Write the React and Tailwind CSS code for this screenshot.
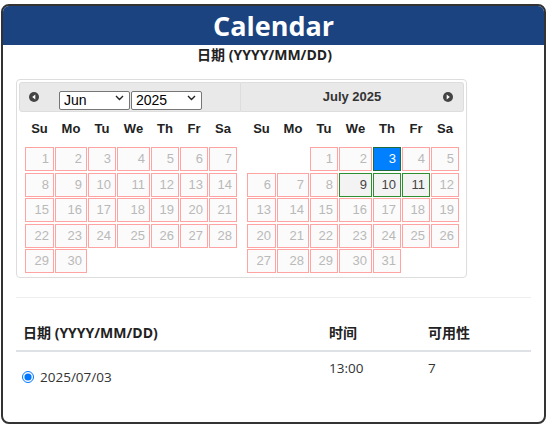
import { useState } from 'react'

const COLS = [29, 32, 28, 33, 28, 28, 28]
const DAYS = ['Su', 'Mo', 'Tu', 'We', 'Th', 'Fr', 'Sa']
const ENABLED = [9, 10, 11]

function CircleArrow({ dir }) {
  return (
    <svg width="10" height="10" viewBox="0 0 10 10" className="block">
      <circle cx="5" cy="5" r="5" fill="#444" />
      {dir === 'prev' ? (
        <polygon points="6.3,2.6 6.3,7.4 3.2,5" fill="#fff" />
      ) : (
        <polygon points="3.7,2.6 3.7,7.4 6.8,5" fill="#fff" />
      )}
    </svg>
  )
}

function FakeSelect({ value, options }) {
  return (
    <div className="relative w-[71px] h-[19px]">
      <select
        defaultValue={value}
        className="appearance-none w-full h-full border border-[#767676] rounded-[2px] bg-white pl-[4px] text-[14px] leading-[17px] text-black outline-none"
      >
        {options.map((o) => <option key={o}>{o}</option>)}
      </select>
      <svg width="9" height="6" viewBox="0 0 9 6" className="absolute right-[6px] top-[7px] pointer-events-none">
        <path d="M1 1l3.5 3.5L8 1" fill="none" stroke="#222" strokeWidth="1.4" />
      </svg>
    </div>
  )
}

function Cell({ day, selected, enabled }) {
  if (!day) return <div />
  if (selected) {
    return (
      <div className="h-[24px] border border-[#1e6b3c] bg-[#007fff] text-white text-right pr-[4px] leading-[22px]">{day}</div>
    )
  }
  if (enabled) {
    return (
      <div className="h-[24px] border border-[#2f8f2f] bg-[#f3f3f3] text-[#454545] text-right pr-[4px] leading-[22px]">{day}</div>
    )
  }
  return (
    <div className="h-[24px] border border-[#ffa3a3] bg-[#fbfbfb] text-[#b9b9b9] text-right pr-[4px] leading-[22px]">{day}</div>
  )
}

function Month({ offset, count, active }) {
  const cells = []
  for (let i = 0; i < offset; i++) cells.push(null)
  for (let d = 1; d <= count; d++) cells.push(d)
  const template = COLS.map((c) => c + 'px').join(' ')
  return (
    <div className="pl-[6px]">
      <div className="grid h-[34px] items-center gap-x-[1px]" style={{ gridTemplateColumns: template }}>
        {DAYS.map((d) => (
          <div key={d} className="text-center font-bold text-[13px] text-[#222]">{d}</div>
        ))}
      </div>
      <div className="grid mt-[1px] gap-x-[1px] gap-y-[1.5px] text-[13px]" style={{ gridTemplateColumns: template }}>
        {cells.map((d, i) => (
          <Cell key={i} day={d} selected={active && d === 3} enabled={active && ENABLED.includes(d)} />
        ))}
      </div>
    </div>
  )
}

export default function App() {
  const [picked] = useState('2025/07/03')
  return (
    <div className="w-[554px] h-[428px] bg-white pt-[4px] pl-[1px]">
      <div className="w-[545px] h-[420px] border-2 border-[#333] rounded-[8px] overflow-hidden bg-white">
        <div className="h-[39px] bg-[#1b4380] text-white text-center font-bold text-[27px] leading-[39px] font-['Open_Sans',sans-serif]">
          Calendar
        </div>
        <div className="text-center pr-[18px] font-bold text-[14px] leading-[20px] text-[#222] font-['Open_Sans','Noto_Sans_CJK_SC',sans-serif]">
          日期 (YYYY/MM/DD)
        </div>

        <div className="ml-[13px] mt-[14px] w-[451px] h-[199px] border border-[#dddddd] rounded-[4px] p-[2px] font-['Liberation_Sans',Arial,sans-serif]">
          <div className="flex">
            <div className="w-[222px]">
              <div className="h-[30px] bg-[#e9e9e9] border border-[#dddddd] rounded-l-[3px] flex items-center">
                <div className="ml-[9px]"><CircleArrow dir="prev" /></div>
                <div className="ml-[20px] flex gap-[1px]">
                  <FakeSelect value="Jun" options={['Jan', 'Feb', 'Mar', 'Apr', 'May', 'Jun', 'Jul', 'Aug', 'Sep', 'Oct', 'Nov', 'Dec']} />
                  <FakeSelect value="2025" options={['2024', '2025', '2026']} />
                </div>
              </div>
              <Month offset={0} count={30} />
            </div>
            <div className="w-[223px]">
              <div className="h-[30px] bg-[#e9e9e9] border border-l-0 border-[#dddddd] rounded-r-[3px] flex items-center relative">
                <div className="flex-1 text-center font-bold text-[13px] text-[#333]">July 2025</div>
                <div className="absolute right-[10px] top-[9px]"><CircleArrow dir="next" /></div>
              </div>
              <Month offset={2} count={31} active />
            </div>
          </div>
        </div>

        <div className="mx-[13px] mt-[19px] border-t border-[#eeeeee] font-['Open_Sans','Noto_Sans_CJK_SC',sans-serif] text-[13.5px] text-[#222]">
          <div className="mt-[17px] flex pt-[8px] pb-[7px] border-b-2 border-[#dee2e6] font-bold text-[14px] leading-[20px]">
            <div className="w-[306px] pl-[7px]">日期 (YYYY/MM/DD)</div>
            <div className="w-[99px] pl-[7px]">时间</div>
            <div className="flex-1 pl-[7px]">可用性</div>
          </div>
          <div className="flex leading-[20px] text-[#333]">
            <label className="w-[306px] pl-[6px] pt-[15px] flex items-center gap-[6px]">
              <input type="radio" name="slot" defaultChecked className="w-[12px] h-[12px] m-0 accent-[#0075ff]" />
              <span>{picked}</span>
            </label>
            <div className="w-[99px] pl-[7px] pt-[6px]">13:00</div>
            <div className="flex-1 pl-[7px] pt-[6px]">7</div>
          </div>
        </div>
      </div>
    </div>
  )
}
